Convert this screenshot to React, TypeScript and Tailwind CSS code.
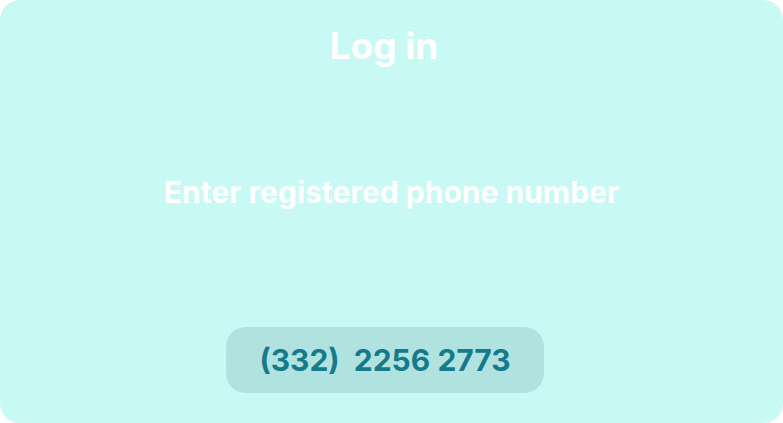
export default function App() {
  return (
    <div className="w-[783px] h-[423px] bg-white" style={{ fontFamily: "Inter, sans-serif" }}>
      <div className="w-full h-full rounded-[20px] bg-[#c8f9f5] flex flex-col items-center">
        <h1 className="mt-[22px] mr-[15px] text-[37px] leading-[48px] font-bold text-white">Log in</h1>
        <p className="mt-[104px] text-[30px] leading-[36px] font-bold text-white">Enter registered phone number</p>
        <div className="mt-[117px] mr-[13px] w-[318px] h-[66px] rounded-[20px] bg-[#b0e3e0] flex items-center justify-center">
          <span className="text-[30px] font-bold text-[#167a8b] whitespace-pre">(332)  2256 2773</span>
        </div>
      </div>
    </div>
  );
}
